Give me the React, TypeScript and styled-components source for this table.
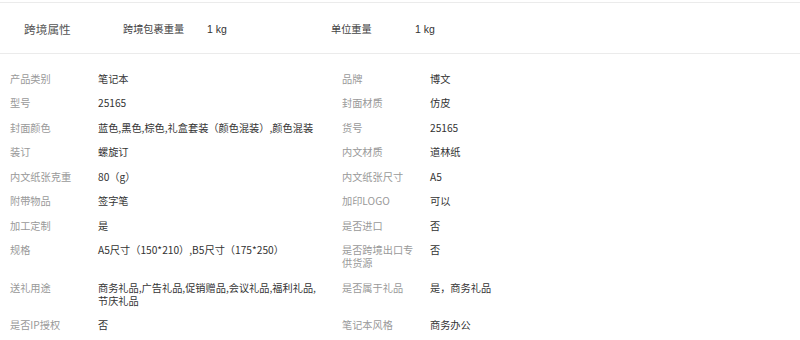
import React from "react";
import styled, { createGlobalStyle } from "styled-components";

const GlobalStyle = createGlobalStyle`
  body {
    margin: 0;
    background: #fff;
    font-family: "Noto Sans CJK SC", "Liberation Sans", sans-serif;
  }
`;

type Attr = { label: string; value: string };

const crossBorder: Attr[] = [
  { label: "跨境包裹重量", value: "1 kg" },
  { label: "单位重量", value: "1 kg" }
];

const attrs: [Attr, Attr][] = [
  [
    { label: "产品类别", value: "笔记本" },
    { label: "品牌", value: "博文" }
  ],
  [
    { label: "型号", value: "25165" },
    { label: "封面材质", value: "仿皮" }
  ],
  [
    { label: "封面颜色", value: "蓝色,黑色,棕色,礼盒套装（颜色混装）,颜色混装" },
    { label: "货号", value: "25165" }
  ],
  [
    { label: "装订", value: "螺旋订" },
    { label: "内文材质", value: "道林纸" }
  ],
  [
    { label: "内文纸张克重", value: "80（g）" },
    { label: "内文纸张尺寸", value: "A5" }
  ],
  [
    { label: "附带物品", value: "签字笔" },
    { label: "加印LOGO", value: "可以" }
  ],
  [
    { label: "加工定制", value: "是" },
    { label: "是否进口", value: "否" }
  ],
  [
    { label: "规格", value: "A5尺寸（150*210）,B5尺寸（175*250）" },
    { label: "是否跨境出口专供货源", value: "否" }
  ],
  [
    { label: "送礼用途", value: "商务礼品,广告礼品,促销赠品,会议礼品,福利礼品,节庆礼品" },
    { label: "是否属于礼品", value: "是，商务礼品" }
  ],
  [
    { label: "是否IP授权", value: "否" },
    { label: "笔记本风格", value: "商务办公" }
  ]
];

const App: React.FC = () => {
  return (
    <>
      <GlobalStyle />
      <Wrapper>
        <CrossBorderBar>
          <BarTitle>跨境属性</BarTitle>
          {crossBorder.map(item => (
            <BarItem key={item.label}>
              <BarLabel>{item.label}</BarLabel>
              <BarValue>{item.value}</BarValue>
            </BarItem>
          ))}
        </CrossBorderBar>
        <AttrTable>
          {attrs.map(pair =>
            pair.map(item => (
              <React.Fragment key={item.label}>
                <AttrLabel>{item.label}</AttrLabel>
                <AttrValue>{item.value}</AttrValue>
              </React.Fragment>
            ))
          )}
        </AttrTable>
      </Wrapper>
    </>
  );
};

const Wrapper = styled.div`
  padding-top: 2px;
`;

const CrossBorderBar = styled.div`
  display: flex;
  align-items: center;
  height: 50px;
  border-top: 1px solid #ebebeb;
  border-bottom: 1px solid #ebebeb;
  padding-left: 24px;
`;

const BarTitle = styled.div`
  width: 99px;
  font-size: 11.7px;
  color: #555;
`;

const BarItem = styled.div`
  display: flex;
  align-items: baseline;
  width: 208px;
  font-size: 10.2px;
  color: #444;
`;

const BarLabel = styled.span`
  width: 84px;
`;

const BarValue = styled.span`
  font-family: "Liberation Sans", sans-serif;
  font-size: 10.5px;
  color: #333;
`;

const AttrTable = styled.div`
  display: grid;
  grid-template-columns: 88px 244px 88px 1fr;
  padding: 12px 0 0 10px;
  font-size: 10.2px;
  line-height: 13px;
`;

const AttrLabel = styled.div`
  padding: 5.75px 12px 5.75px 0;
  color: #999;
`;

const AttrValue = styled.div`
  padding: 5.75px 24px 5.75px 0;
  color: #333;
`;

export default App;
